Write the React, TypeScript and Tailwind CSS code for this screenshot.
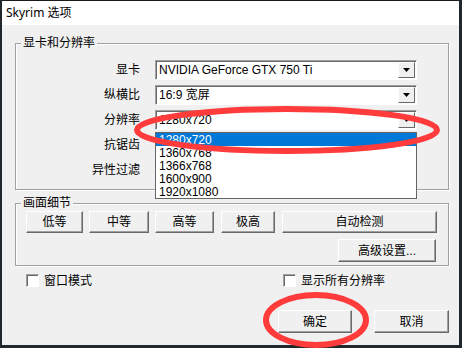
import React from 'react';

const font = { fontFamily: '"Liberation Sans", "Noto Sans CJK SC", sans-serif' };

const btn =
  'flex items-center justify-center bg-[#f0f0f0] border border-t-white border-l-white border-b-[#696969] border-r-[#696969] shadow-[inset_-1px_-1px_0_#a0a0a0] text-[12px] text-black leading-none';

function Arrow() {
  return (
    <div className="ml-auto mr-[1px] w-[17px] h-[16px] flex items-center justify-center bg-[#f0f0f0] border border-t-white border-l-white border-b-[#696969] border-r-[#696969]">
      <svg width="7" height="4" viewBox="0 0 7 4">
        <path d="M0 0h7L3.5 4z" fill="#000" />
      </svg>
    </div>
  );
}

function Combo({ value }: { value: string }) {
  return (
    <div className="w-[262px] h-[20px] flex items-center bg-white border border-t-[#a0a0a0] border-l-[#a0a0a0] border-b-white border-r-white shadow-[inset_1px_1px_0_#696969]">
      <span className="pl-[3px] text-[12px] leading-none text-black">{value}</span>
      <Arrow />
    </div>
  );
}

function Group({ title, className, children }: { title: string; className: string; children: React.ReactNode }) {
  return (
    <div className={`relative border border-[#a0a0a0] shadow-[inset_1px_1px_0_#fff,1px_1px_0_#fff] ${className}`}>
      <span className="absolute left-[5px] -top-[8px] px-[2px] bg-[#f0f0f0] text-[12px] leading-[14px]">{title}</span>
      {children}
    </div>
  );
}

function Check({ label }: { label: string }) {
  return (
    <div className="flex items-center">
      <div className="w-[13px] h-[13px] bg-white border border-t-[#a0a0a0] border-l-[#a0a0a0] border-b-white border-r-white shadow-[inset_1px_1px_0_#696969]" />
      <span className="ml-[5px] text-[12px] leading-none">{label}</span>
    </div>
  );
}

const rows = [
  { label: '显卡', value: 'NVIDIA GeForce GTX 750 Ti' },
  { label: '纵横比', value: '16:9 宽屏' },
  { label: '分辨率', value: '1280x720' },
  { label: '抗锯齿', value: '' },
  { label: '异性过滤', value: '' },
];

const options = ['1280x720', '1360x768', '1366x768', '1600x900', '1920x1080'];

export default function App() {
  return (
    <div className="relative w-[462px] h-[348px] bg-[#20282c] pl-[2px] pr-[3px] pb-[3px] overflow-hidden" style={font}>
      <div className="w-[457px] h-[345px] flex flex-col border-t border-[#1a1a1a]">
        <div className="h-[24px] bg-white flex items-center pl-[4px] text-[12px] text-black" style={{ fontFamily: '"Noto Sans", "Noto Sans CJK SC", sans-serif' }}>
          Skyrim 选项
        </div>
        <div className="flex-1 bg-[#f0f0f0] pl-[13px] pt-[18px] text-black">
          <Group title="显卡和分辨率" className="w-[434px] h-[147px] pt-[16px]">
            <div className="flex flex-col gap-[5px]">
              {rows.map((r) => (
                <div key={r.label} className="flex items-center">
                  <span className="w-[124px] text-right text-[12px] leading-none">{r.label}</span>
                  <div className="ml-[15px]">
                    <Combo value={r.value} />
                  </div>
                </div>
              ))}
            </div>
            <div className="absolute left-[139px] top-[88px] w-[262px] h-[67px] bg-white border border-[#646464] flex flex-col">
              {options.map((o, i) => (
                <div
                  key={o}
                  className={`h-[13px] pl-[3px] flex items-center text-[12px] leading-none ${i === 0 ? 'bg-[#0078d7] text-white' : 'text-black'}`}
                >
                  {o}
                </div>
              ))}
            </div>
          </Group>

          <Group title="画面细节" className="mt-[13px] w-[434px] h-[63px] pt-[7px] pl-[10px]">
            <div className="flex">
              <div className={`${btn} w-[57px] h-[22px]`}>低等</div>
              <div className={`${btn} ml-[6px] w-[60px] h-[22px]`}>中等</div>
              <div className={`${btn} ml-[6px] w-[59px] h-[22px]`}>高等</div>
              <div className={`${btn} ml-[7px] w-[54px] h-[22px]`}>极高</div>
              <div className={`${btn} ml-[7px] w-[155px] h-[22px]`}>自动检测</div>
            </div>
            <div className="flex mt-[6px] pl-[312px]">
              <div className={`${btn} w-[98px] h-[23px]`}>高级设置...</div>
            </div>
          </Group>

          <div className="flex mt-[8px] pl-[11px]">
            <div className="w-[257px]">
              <Check label="窗口模式" />
            </div>
            <Check label="显示所有分辨率" />
          </div>

          <div className="flex mt-[23px] pl-[263px]">
            <div className={`${btn} w-[74px] h-[23px]`}>确定</div>
            <div className={`${btn} ml-[22px] w-[75px] h-[23px]`}>取消</div>
          </div>
        </div>
      </div>

      <svg className="absolute left-0 top-0 pointer-events-none" width="462" height="348" viewBox="0 0 462 348">
        <ellipse cx="287" cy="130" rx="150" ry="21" fill="none" stroke="#ff3b3b" strokeWidth="6" />
        <ellipse cx="316" cy="320" rx="50" ry="25" fill="none" stroke="#ff3b3b" strokeWidth="6" />
      </svg>
    </div>
  );
}
